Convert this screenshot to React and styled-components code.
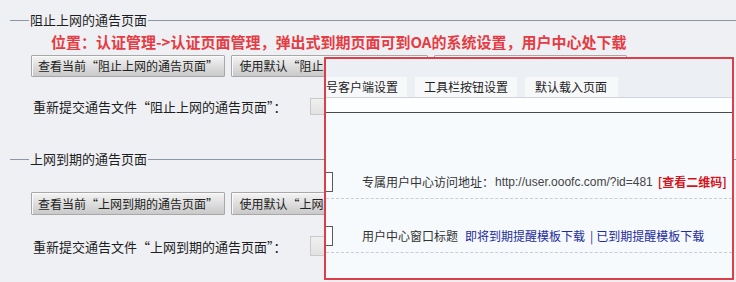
import React from "react";
import styled, { createGlobalStyle } from "styled-components";

const Global = createGlobalStyle`
  html, body { margin: 0; padding: 0; }
  body {
    background: #eef0f4;
    font-family: "Noto Sans CJK SC", "Liberation Sans", sans-serif;
    color: #222;
  }
`;

const Page = styled.div`
  position: relative;
  width: 736px;
  height: 282px;
  overflow: hidden;
  background: #eef0f4;
`;

const Section = styled.section`
  display: flex;
  flex-direction: column;
  margin-top: ${(p) => p.$top}px;
`;

const LegendRow = styled.div`
  display: flex;
  align-items: center;
  height: 16px;
  padding-left: 10px;
`;

const Rule = styled.div`
  height: 1px;
  background: #8d96a4;
  flex: ${(p) => (p.$grow ? 1 : "none")};
  width: ${(p) => (p.$grow ? "auto" : "19px")};
`;

const Legend = styled.span`
  font-size: 13px;
  line-height: 16px;
  color: #1e1e1e;
  padding: 0 1px;
`;

const Notice = styled.div`
  margin-top: 5px;
  padding-left: 51px;
  height: 17px;
  line-height: 17px;
  font-size: 15px;
  font-weight: 700;
  color: #e63b43;
  white-space: nowrap;
`;

const ButtonRow = styled.div`
  display: flex;
  gap: 6px;
  padding-left: 31px;
  margin-top: ${(p) => p.$top}px;
`;

const Btn = styled.button`
  box-sizing: border-box;
  width: ${(p) => p.$w}px;
  height: ${(p) => p.$h}px;
  padding: 0;
  border: 1px solid #a8a8a8;
  border-radius: 1px;
  background: linear-gradient(#f4f4f4, #dcdcdc 55%, #c9c9c9);
  box-shadow: inset 1px 1px 0 #fafafa;
  font-family: "Noto Sans CJK SC", "Liberation Sans", sans-serif;
  font-size: 12px;
  line-height: 20px;
  color: #222;
  white-space: nowrap;
  overflow: hidden;
`;

const FileRow = styled.div`
  display: flex;
  align-items: center;
  height: ${(p) => p.$h}px;
  margin-top: 21px;
  padding-left: 33px;
`;

const FileLabel = styled.span`
  width: 277px;
  font-size: 13px;
  line-height: 17px;
  color: #1e1e1e;
  white-space: nowrap;
`;

const FileBox = styled.div`
  width: 40px;
  height: 100%;
  box-sizing: border-box;
  border: 1px solid #c9c9c9;
  background: linear-gradient(#f0f0f0, #e2e2e2);
`;

/* overlay window */
const Popup = styled.div`
  position: absolute;
  left: 324px;
  top: 57px;
  width: 410px;
  height: 223px;
  box-sizing: border-box;
  border: 2px solid #dc3e4a;
  background: #f6fafd;
  overflow: hidden;
  display: flex;
  flex-direction: column;
`;

const TabBar = styled.div`
  height: 39px;
  box-sizing: border-box;
  display: flex;
  align-items: flex-end;
  gap: 8px;
  background: #eceff4;
  border-bottom: 1px solid #cfd3da;
`;

const Tab = styled.div`
  height: 20px;
  line-height: 20px;
  padding: 0 ${(p) => p.$pr}px 0 ${(p) => p.$pl}px;
  background: #f7f8fa;
  font-size: 12px;
  color: #222;
  white-space: nowrap;
`;

const Strip = styled.div`
  height: 15px;
  box-sizing: border-box;
  background: #fdfeff;
  border-bottom: 1px solid #4a4a4a;
`;

const Row = styled.div`
  height: ${(p) => p.$h}px;
  box-sizing: border-box;
  display: flex;
  align-items: flex-end;
  padding-bottom: 6px;
  border-bottom: 1px dashed #c9cdd3;
  font-size: 12px;
  line-height: 20px;
  color: #333;
  white-space: nowrap;
`;

const Bracket = styled.div`
  width: 14px;
  height: 20px;
  box-sizing: border-box;
  margin-left: -7px;
  margin-right: 29px;
  border: 1px solid #5a5a5a;
  background: #fff;
  flex: none;
`;

const Url = styled.span`
  font-family: "Liberation Sans", sans-serif;
  font-size: 12px;
  color: #444;
  margin-left: 1px;
`;

const QrLink = styled.span`
  color: #d4121c;
  font-weight: 700;
  margin-left: 5px;
`;

const Link = styled.span`
  color: #1f2c9e;
  margin-left: ${(p) => p.$ml || 0}px;
`;

const Sep = styled.span`
  color: #1f2c9e;
  margin: 0 3px 0 5px;
`;

export default function App() {
  return (
    <Page>
      <Global />
      <Section $top={12}>
        <LegendRow>
          <Rule />
          <Legend>阻止上网的通告页面</Legend>
          <Rule $grow />
        </LegendRow>
        <Notice>位置：认证管理-&gt;认证页面管理，弹出式到期页面可到OA的系统设置，用户中心处下载</Notice>
        <ButtonRow $top={5}>
          <Btn $w={194} $h={22}>查看当前“阻止上网的通告页面”</Btn>
          <Btn $w={197} $h={22}>使用默认“阻止上网的通告页面”</Btn>
          <Btn $w={193} $h={22}>上传自定义“阻止上网的通告页面”</Btn>
        </ButtonRow>
        <FileRow $h={17}>
          <FileLabel>重新提交通告文件“阻止上网的通告页面”：</FileLabel>
          <FileBox />
        </FileRow>
      </Section>

      <Section $top={36}>
        <LegendRow>
          <Rule />
          <Legend>上网到期的通告页面</Legend>
          <Rule $grow />
        </LegendRow>
        <ButtonRow $top={25}>
          <Btn $w={194} $h={23}>查看当前“上网到期的通告页面”</Btn>
          <Btn $w={197} $h={23}>使用默认“上网到期的通告页面”</Btn>
          <Btn $w={193} $h={23}>上传自定义“上网到期的通告页面”</Btn>
        </ButtonRow>
        <FileRow $h={20}>
          <FileLabel>重新提交通告文件“上网到期的通告页面”：</FileLabel>
          <FileBox />
        </FileRow>
      </Section>

      <Popup>
        <TabBar>
          <Tab $pl={0} $pr={9}>号客户端设置</Tab>
          <Tab $pl={9} $pr={9}>工具栏按钮设置</Tab>
          <Tab $pl={10} $pr={11}>默认载入页面</Tab>
        </TabBar>
        <Strip />
        <Row $h={86}>
          <Bracket />
          <span>专属用户中心访问地址：</span>
          <Url>http://user.ooofc.com/?id=481</Url>
          <QrLink>[查看二维码]</QrLink>
        </Row>
        <Row $h={54}>
          <Bracket />
          <span>用户中心窗口标题</span>
          <Link $ml={7}>即将到期提醒模板下载</Link>
          <Sep>|</Sep>
          <Link>已到期提醒模板下载</Link>
        </Row>
      </Popup>
    </Page>
  );
}
